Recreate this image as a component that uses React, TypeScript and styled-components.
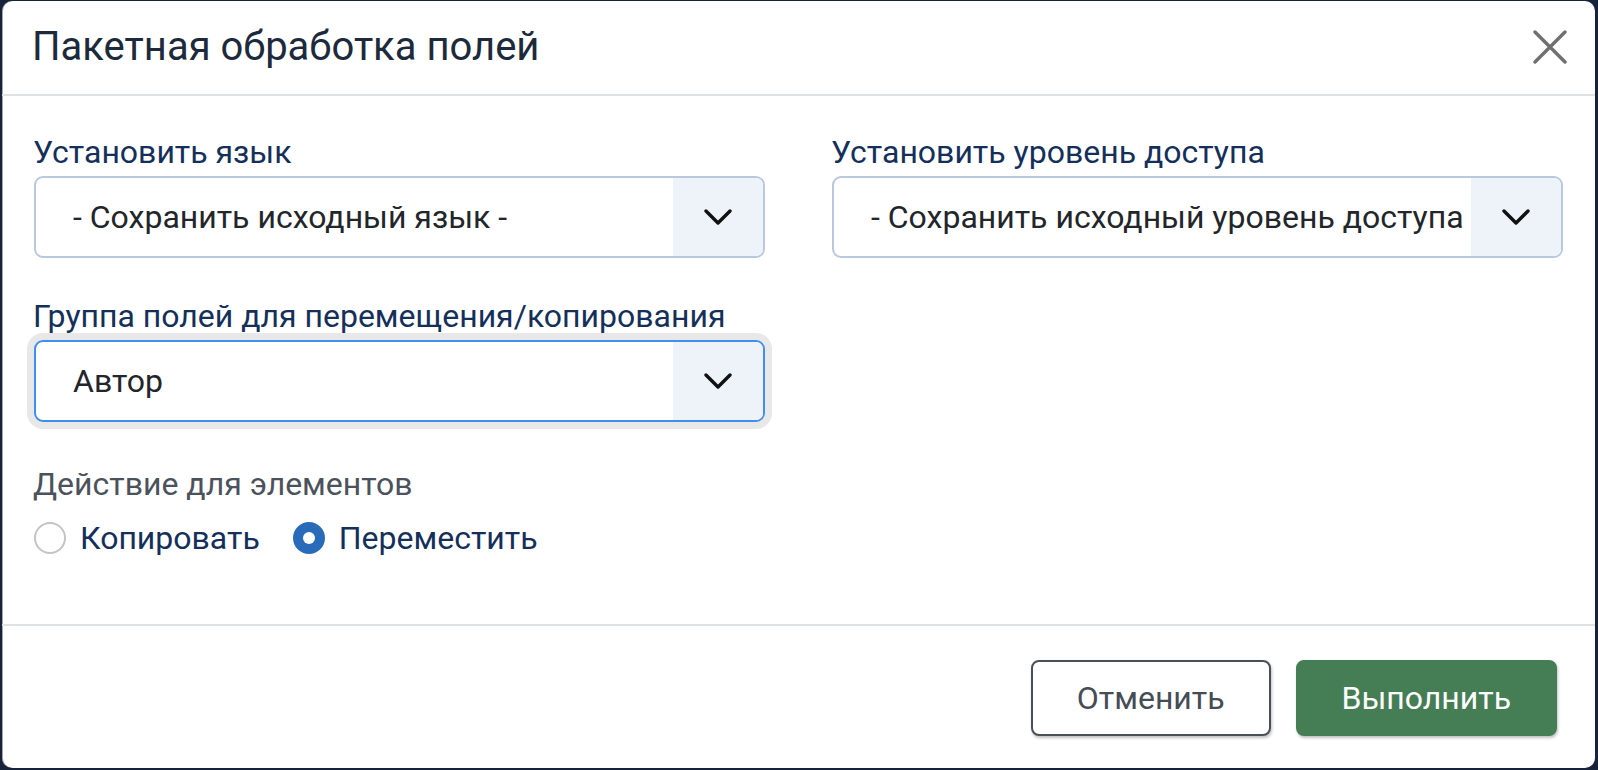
import { createGlobalStyle } from "styled-components";
import styled from "styled-components";

const GlobalStyle = createGlobalStyle`
  html, body {
    margin: 0;
    padding: 0;
    background: #16233a;
  }
  body {
    font-family: Roboto, "Liberation Sans", Arial, sans-serif;
  }
  * {
    box-sizing: border-box;
  }
`;

const Backdrop = styled.div`
  width: 1598px;
  height: 770px;
  padding: 1px 3px 2px 2px;
  background: #16233a;
`;

const Modal = styled.div`
  width: 1593px;
  height: 767px;
  background: #fff;
  border-radius: 10px;
  overflow: hidden;
  display: flex;
  flex-direction: column;
  box-shadow: inset 1px 0 0 rgba(0, 0, 0, 0.35);
`;

const Header = styled.header`
  height: 95px;
  flex-shrink: 0;
  display: flex;
  align-items: center;
  justify-content: space-between;
  padding: 0 28px 2px 30px;
  border-bottom: 2px solid #dee2e6;
`;

const Title = styled.h5`
  margin: 0;
  font-size: 40px;
  font-weight: 400;
  line-height: 60px;
  color: #1c2a3c;
`;

const CloseButton = styled.button`
  width: 34px;
  height: 34px;
  padding: 0;
  border: 0;
  background: none;
  display: flex;
  align-items: center;
  justify-content: center;
  cursor: pointer;
`;

const Body = styled.div`
  flex: 1;
  padding: 32px 32px 0 32px;
`;

const Row = styled.div`
  display: grid;
  grid-template-columns: minmax(0, 1fr) minmax(0, 1fr);
  column-gap: 67px;
`;

const Group = styled.div`
  min-width: 0;
  margin-bottom: 34px;
`;

const Label = styled.label`
  display: block;
  margin-left: -1px;
  font-size: 32px;
  line-height: 48px;
  color: #14305a;
`;

const Select = styled.div<{ $focused?: boolean }>`
  height: 82px;
  display: flex;
  border: 2px solid ${(p) => (p.$focused ? "#3f8ef0" : "#b9c8de")};
  border-radius: 9px;
  overflow: hidden;
  box-shadow: ${(p) => (p.$focused ? "0 0 0 7px #e8e8e8" : "none")};
  background: #fff;
`;

const SelectValue = styled.div`
  flex: 1;
  min-width: 0;
  display: flex;
  align-items: center;
  padding: 0 6px 0 37px;
`;

const ValueText = styled.span`
  display: block;
  font-size: 32px;
  color: #22262a;
  white-space: nowrap;
  overflow: hidden;
`;

const SelectArrow = styled.div`
  width: 90px;
  flex-shrink: 0;
  display: flex;
  align-items: center;
  justify-content: center;
  background: #eef3fa;
`;

const Legend = styled.div`
  margin: 4px 0 0 -1px;
  font-size: 32px;
  line-height: 48px;
  color: #4b525b;
`;

const RadioRow = styled.div`
  display: flex;
  align-items: center;
  margin-top: 6px;
  gap: 33px;
`;

const RadioItem = styled.label`
  display: flex;
  align-items: center;
  gap: 14px;
  font-size: 32px;
  line-height: 48px;
  color: #14305a;
`;

const RadioCircle = styled.span<{ $checked?: boolean }>`
  width: 32px;
  height: 32px;
  border-radius: 50%;
  flex-shrink: 0;
  display: flex;
  align-items: center;
  justify-content: center;
  border: 2px solid ${(p) => (p.$checked ? "#2a6bb9" : "#c4c4c4")};
  background: ${(p) => (p.$checked ? "#2a6bb9" : "#fff")};
`;

const RadioDot = styled.span`
  width: 12px;
  height: 12px;
  border-radius: 50%;
  background: #fff;
`;

const Footer = styled.footer`
  height: 144px;
  flex-shrink: 0;
  display: flex;
  align-items: center;
  justify-content: flex-end;
  gap: 25px;
  padding: 2px 38px 0 0;
  border-top: 2px solid #dee2e6;
`;

const Button = styled.button<{ $primary?: boolean }>`
  height: 76px;
  padding: 0 44px;
  font-family: Roboto, "Liberation Sans", Arial, sans-serif;
  font-size: 32px;
  border-radius: 8px;
  cursor: pointer;
  border: 2px solid ${(p) => (p.$primary ? "#457d54" : "#4a5058")};
  background: ${(p) => (p.$primary ? "#457d54" : "#fff")};
  color: ${(p) => (p.$primary ? "#fff" : "#454c55")};
  box-shadow: 1px 2px 3px rgba(0, 0, 0, 0.25);
`;

function Chevron() {
  return (
    <svg width="28" height="16" viewBox="0 0 28 16">
      <polyline
        points="2,2 14,14 26,2"
        fill="none"
        stroke="#111"
        strokeWidth="3.4"
        strokeLinecap="round"
        strokeLinejoin="round"
      />
    </svg>
  );
}

function SelectBox({ value, focused }: { value: string; focused?: boolean }) {
  return (
    <Select $focused={focused}>
      <SelectValue>
        <ValueText>{value}</ValueText>
      </SelectValue>
      <SelectArrow>
        <Chevron />
      </SelectArrow>
    </Select>
  );
}

export default function App() {
  return (
    <Backdrop>
      <GlobalStyle />
      <Modal>
        <Header>
          <Title>Пакетная обработка полей</Title>
          <CloseButton aria-label="Закрыть">
            <svg width="34" height="34" viewBox="0 0 34 34">
              <path
                d="M2 2 L32 32 M32 2 L2 32"
                stroke="#707070"
                strokeWidth="3.4"
                strokeLinecap="round"
              />
            </svg>
          </CloseButton>
        </Header>
        <Body>
          <Row>
            <Group>
              <Label>Установить язык</Label>
              <SelectBox value="- Сохранить исходный язык -" />
            </Group>
            <Group>
              <Label>Установить уровень доступа</Label>
              <SelectBox value="- Сохранить исходный уровень доступа -" />
            </Group>
          </Row>
          <Row>
            <Group>
              <Label>Группа полей для перемещения/копирования</Label>
              <SelectBox value="Автор" focused />
            </Group>
          </Row>
          <Legend>Действие для элементов</Legend>
          <RadioRow>
            <RadioItem>
              <RadioCircle />
              Копировать
            </RadioItem>
            <RadioItem>
              <RadioCircle $checked>
                <RadioDot />
              </RadioCircle>
              Переместить
            </RadioItem>
          </RadioRow>
        </Body>
        <Footer>
          <Button>Отменить</Button>
          <Button $primary>Выполнить</Button>
        </Footer>
      </Modal>
    </Backdrop>
  );
}
